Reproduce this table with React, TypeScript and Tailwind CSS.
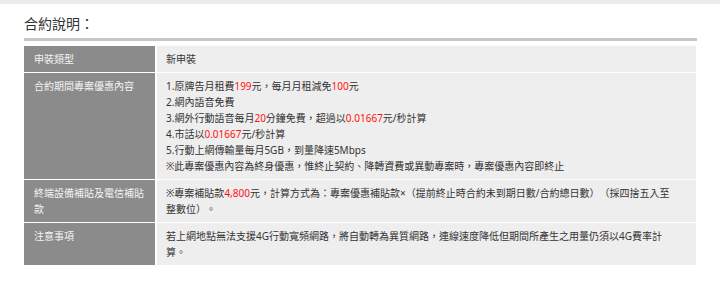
const FONT = "font-['Noto_Sans','Noto_Sans_CJK_TC',sans-serif]";

function Red({ children }: { children: React.ReactNode }) {
  return <span className="text-[#ff1010]">{children}</span>;
}

const rows: { label: string; body: React.ReactNode }[] = [
  { label: "申裝類型", body: <div>新申裝</div> },
  {
    label: "合約期間專案優惠內容",
    body: (
      <>
        <div>
          1.原牌告月租費<Red>199</Red>元，每月月租減免<Red>100</Red>元
        </div>
        <div>2.網內語音免費</div>
        <div>
          3.網外行動語音每月<Red>20</Red>分鐘免費，超過以<Red>0.01667</Red>元/秒計算
        </div>
        <div>
          4.市話以<Red>0.01667</Red>元/秒計算
        </div>
        <div>5.行動上網傳輸量每月5GB，到量降速5Mbps</div>
        <div>※此專案優惠內容為終身優惠，惟終止契約、降轉資費或異動專案時，專案優惠內容即終止</div>
      </>
    ),
  },
  {
    label: "終端設備補貼及電信補貼款",
    body: (
      <div>
        ※專案補貼款<Red>4,800</Red>元，計算方式為：專案優惠補貼款×（提前終止時合約未到期日數/合約總日數）（採四捨五入至
        <br />
        整數位）。
      </div>
    ),
  },
  {
    label: "注意事項",
    body: (
      <div>
        若上網地點無法支援4G行動寬頻網路，將自動轉為異質網路，連線速度降低但期間所產生之用量仍須以4G費率計
        <br />
        算。
      </div>
    ),
  },
];

export default function App() {
  return (
    <div className={`w-[720px] h-[285px] bg-white ${FONT} [text-spacing-trim:space-all]`}>
      <div className="h-[4px] bg-[#ececec]" />
      <div className="pl-[24px] w-[697px]">
        <h2 className="mt-[10px] h-[24px] text-[14px] leading-[20px] text-[#333]">合約說明：</h2>
        <div className="h-[3px] bg-[#c6c6c6]" />
        <div className="mt-[5px] w-[672px] flex flex-col gap-[1px] text-[10px] leading-[16px]">
          {rows.map((r) => (
            <div key={r.label} className="flex gap-[2px]">
              <div className="w-[131px] shrink-0 bg-[#8b8b8b] text-[#f4f4f4] px-[10px] py-[5px]">
                {r.label}
              </div>
              <div className="flex-1 bg-[#eeeeee] text-[#333] pl-[9px] pr-[8px] py-[5px] whitespace-nowrap">
                {r.body}
              </div>
            </div>
          ))}
        </div>
      </div>
    </div>
  );
}
